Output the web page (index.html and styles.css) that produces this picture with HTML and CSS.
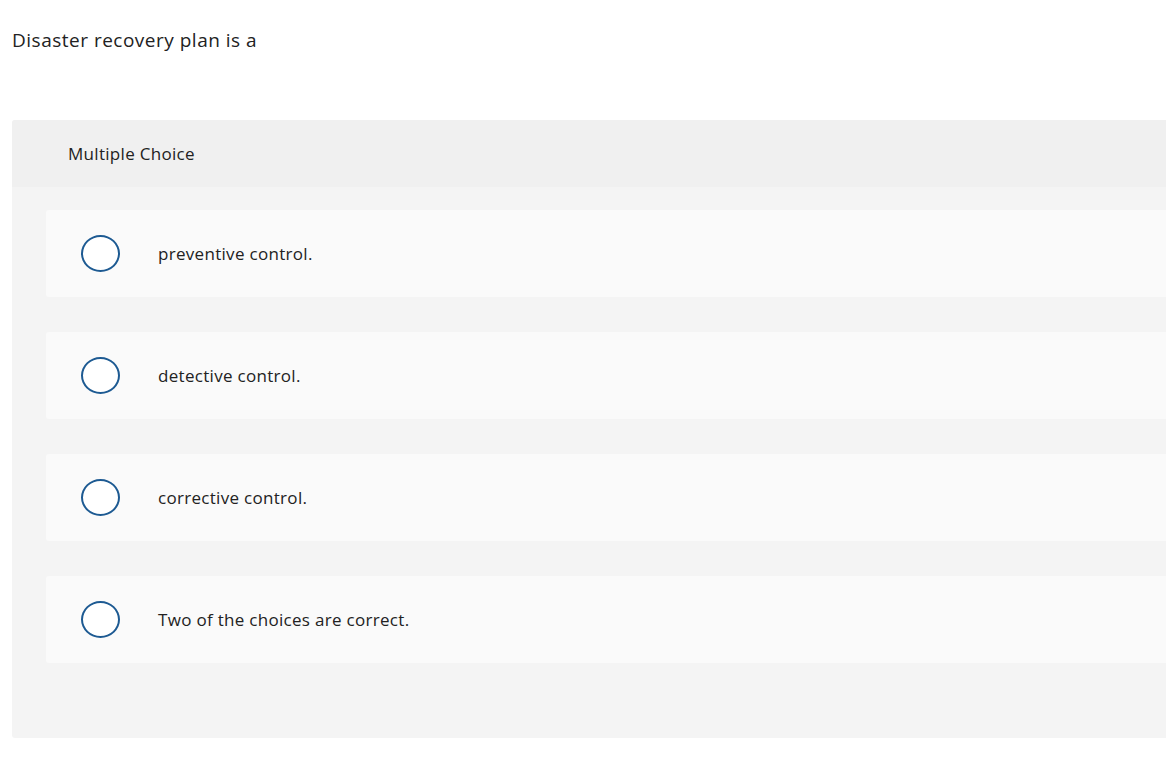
FILE: index.html
```html
<!DOCTYPE html>
<html>
<head>
<meta charset="utf-8">
<link rel="stylesheet" href="styles.css">
</head>
<body>
<div class="page">
  <p class="question">Disaster recovery plan is a</p>
  <section class="panel">
    <div class="panel-head">Multiple Choice</div>
    <div class="panel-body">
      <label class="option"><span class="radio"></span><span class="opt-text">preventive control.</span></label>
      <label class="option"><span class="radio"></span><span class="opt-text">detective control.</span></label>
      <label class="option"><span class="radio"></span><span class="opt-text">corrective control.</span></label>
      <label class="option"><span class="radio"></span><span class="opt-text">Two of the choices are correct.</span></label>
    </div>
  </section>
</div>
</body>
</html>
```
FILE: styles.css
```css
html, body {
  margin: 0;
  padding: 0;
  background: #ffffff;
}
body {
  font-family: "Open Sans", "Lato", sans-serif;
  color: #222222;
  overflow: hidden;
}
.page {
  padding: 28px 0 0 12px;
}
.question {
  margin: 0;
  font-size: 19px;
  letter-spacing: 0.5px;
  line-height: 24px;
  height: 24px;
  color: #222;
}
.panel {
  margin-top: 68px;
  border-radius: 3px 0 0 3px;
  overflow: hidden;
  height: 618px;
  background: #f4f4f4;
}
.panel-head {
  background: #f0f0f0;
  height: 67px;
  display: flex;
  align-items: center;
  padding-left: 56px;
  font-size: 17px;
  letter-spacing: 0.3px;
  color: #222;
}
.panel-body {
  padding: 23px 0 0 34px;
  display: flex;
  flex-direction: column;
  gap: 35px;
}
.option {
  height: 87px;
  background: #fafafa;
  border-radius: 3px 0 0 3px;
  display: flex;
  align-items: center;
  padding-left: 35px;
  font-size: 17px;
  letter-spacing: 0.3px;
  color: #222;
}
.radio {
  box-sizing: border-box;
  width: 39px;
  height: 37px;
  border: 2px solid #1d5a92;
  border-radius: 50%;
  background: #ffffff;
  flex: none;
}
.opt-text {
  margin-left: 38px;
}
```
